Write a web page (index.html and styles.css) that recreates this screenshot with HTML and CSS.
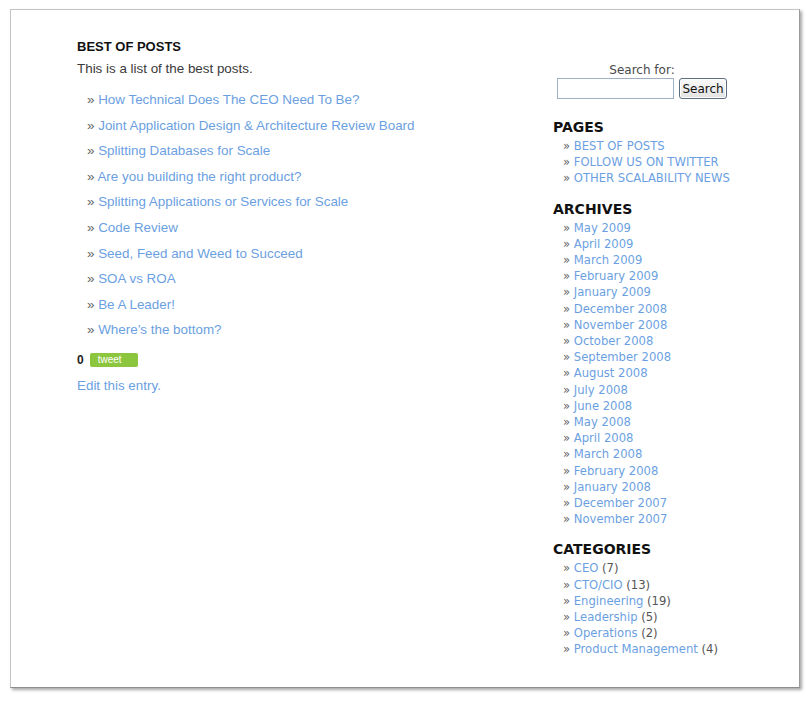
FILE: index.html
```html
<!DOCTYPE html>
<html>
<head>
<meta charset="utf-8">
<link rel="stylesheet" href="styles.css">
</head>
<body>
<div class="frame">
  <div class="viewport">
    <div class="main">
      <h2 class="post-title">BEST OF POSTS</h2>
      <p class="intro">This is a list of the best posts.</p>
      <ul class="post-list">
        <li><span class="raquo">»</span> <a href="#">How Technical Does The CEO Need To Be?</a></li>
        <li><span class="raquo">»</span> <a href="#">Joint Application Design &amp; Architecture Review Board</a></li>
        <li><span class="raquo">»</span> <a href="#">Splitting Databases for Scale</a></li>
        <li><span class="raquo">»</span> <a href="#">Are you building the right product?</a></li>
        <li><span class="raquo">»</span> <a href="#">Splitting Applications or Services for Scale</a></li>
        <li><span class="raquo">»</span> <a href="#">Code Review</a></li>
        <li><span class="raquo">»</span> <a href="#">Seed, Feed and Weed to Succeed</a></li>
        <li><span class="raquo">»</span> <a href="#">SOA vs ROA</a></li>
        <li><span class="raquo">»</span> <a href="#">Be A Leader!</a></li>
        <li><span class="raquo">»</span> <a href="#">Where’s the bottom?</a></li>
      </ul>
      <div class="tweet-row">
        <span class="tweet-count">0</span>
        <span class="tweet-btn">tweet</span>
      </div>
      <a class="edit-link" href="#">Edit this entry.</a>
    </div>
    <div class="sidebar">
      <form class="search">
        <div class="search-label">Search for:</div>
        <div class="search-fields">
          <input class="search-input" type="text">
          <button class="search-btn" type="button">Search</button>
        </div>
      </form>
      <h3 class="widget-title">PAGES</h3>
      <ul class="widget-list">
        <li><span class="raquo">»</span> <a href="#">BEST OF POSTS</a></li>
        <li><span class="raquo">»</span> <a href="#">FOLLOW US ON TWITTER</a></li>
        <li><span class="raquo">»</span> <a href="#">OTHER SCALABILITY NEWS</a></li>
      </ul>
      <h3 class="widget-title">ARCHIVES</h3>
      <ul class="widget-list">
        <li><span class="raquo">»</span> <a href="#">May 2009</a></li>
        <li><span class="raquo">»</span> <a href="#">April 2009</a></li>
        <li><span class="raquo">»</span> <a href="#">March 2009</a></li>
        <li><span class="raquo">»</span> <a href="#">February 2009</a></li>
        <li><span class="raquo">»</span> <a href="#">January 2009</a></li>
        <li><span class="raquo">»</span> <a href="#">December 2008</a></li>
        <li><span class="raquo">»</span> <a href="#">November 2008</a></li>
        <li><span class="raquo">»</span> <a href="#">October 2008</a></li>
        <li><span class="raquo">»</span> <a href="#">September 2008</a></li>
        <li><span class="raquo">»</span> <a href="#">August 2008</a></li>
        <li><span class="raquo">»</span> <a href="#">July 2008</a></li>
        <li><span class="raquo">»</span> <a href="#">June 2008</a></li>
        <li><span class="raquo">»</span> <a href="#">May 2008</a></li>
        <li><span class="raquo">»</span> <a href="#">April 2008</a></li>
        <li><span class="raquo">»</span> <a href="#">March 2008</a></li>
        <li><span class="raquo">»</span> <a href="#">February 2008</a></li>
        <li><span class="raquo">»</span> <a href="#">January 2008</a></li>
        <li><span class="raquo">»</span> <a href="#">December 2007</a></li>
        <li><span class="raquo">»</span> <a href="#">November 2007</a></li>
      </ul>
      <h3 class="widget-title">CATEGORIES</h3>
      <ul class="widget-list">
        <li><span class="raquo">»</span> <a href="#">CEO</a> (7)</li>
        <li><span class="raquo">»</span> <a href="#">CTO/CIO</a> (13)</li>
        <li><span class="raquo">»</span> <a href="#">Engineering</a> (19)</li>
        <li><span class="raquo">»</span> <a href="#">Leadership</a> (5)</li>
        <li><span class="raquo">»</span> <a href="#">Operations</a> (2)</li>
        <li><span class="raquo">»</span> <a href="#">Product Management</a> (4)</li>
      </ul>
    </div>
  </div>
</div>
</body>
</html>
```

FILE: styles.css
```css
html, body {
  margin: 0;
  padding: 0;
  background: #ffffff;
}

body {
  width: 811px;
  height: 702px;
  overflow: hidden;
}

.frame {
  margin: 9px 0 0 10px;
  width: 790px;
  height: 679px;
  box-sizing: border-box;
  border: 1px solid #c4c4c4;
  border-right-color: #9a9a9a;
  border-bottom-color: #8e8e8e;
  box-shadow: 2px 2px 3px rgba(0, 0, 0, 0.35);
  background: #ffffff;
}

.viewport {
  height: 651px;
  overflow: hidden;
  display: flex;
  padding-left: 66px;
}

a {
  color: #6b9fe2;
  text-decoration: none;
}

ul {
  list-style: none;
  margin: 0;
  padding: 0;
}

.raquo {
  color: #666666;
}

/* Main column */
.main {
  width: 476px;
  flex: none;
  padding-top: 30px;
  font-family: "Liberation Sans", Arial, sans-serif;
  font-size: 13.4px;
  color: #3a3a3a;
}

.post-title {
  margin: 0 0 7px;
  font-size: 13px;
  line-height: 14px;
  font-weight: bold;
  color: #111111;
}

.intro {
  margin: 0 0 10px;
  line-height: 16px;
}

.post-list {
  padding-left: 10px;
}

.post-list li {
  line-height: 25.6px;
}

.tweet-row {
  margin-top: 9px;
  height: 16px;
  display: flex;
  align-items: center;
  gap: 6px;
}

.tweet-count {
  font-size: 12px;
  font-weight: bold;
  color: #222222;
}

.tweet-btn {
  width: 48px;
  height: 14px;
  box-sizing: border-box;
  padding-left: 8px;
  background: #8cc63e;
  border-radius: 2px;
  color: #ffffff;
  font-size: 10px;
  line-height: 14px;
}

.edit-link {
  display: block;
  margin-top: 10px;
  line-height: 16px;
}

/* Sidebar */
.sidebar {
  width: 230px;
  flex: none;
  padding-top: 53px;
  font-family: "DejaVu Sans", Verdana, sans-serif;
  font-size: 11.6px;
  color: #555555;
  white-space: nowrap;
}

.search {
  width: 178px;
  margin: 0 0 19px;
  text-align: center;
}

.search-label {
  font-size: 12px;
  line-height: 14px;
  color: #4a4a4a;
}

.search-fields {
  margin-top: 1px;
  display: flex;
  justify-content: center;
  align-items: flex-start;
  gap: 5px;
}

.search-input {
  width: 117px;
  height: 21px;
  box-sizing: border-box;
  margin: 0;
  border: 1px solid #9fb0c4;
  background: #ffffff;
}

.search-btn {
  width: 48px;
  height: 21px;
  box-sizing: border-box;
  margin: 0;
  padding: 0;
  border: 1px solid #5e6f82;
  border-radius: 3px;
  background: linear-gradient(#fafafa, #e2e2e2);
  box-shadow: inset 0 0 0 1px #ffffff;
  font-family: "DejaVu Sans", Verdana, sans-serif;
  font-size: 12px;
  color: #111111;
}

.widget-title {
  margin: 13px 0 2px;
  font-size: 14px;
  line-height: 18px;
  font-weight: bold;
  color: #111111;
}

.search + .widget-title {
  margin-top: 0;
}

.widget-list {
  padding-left: 10px;
}

.widget-list li {
  line-height: 16.2px;
}
```
